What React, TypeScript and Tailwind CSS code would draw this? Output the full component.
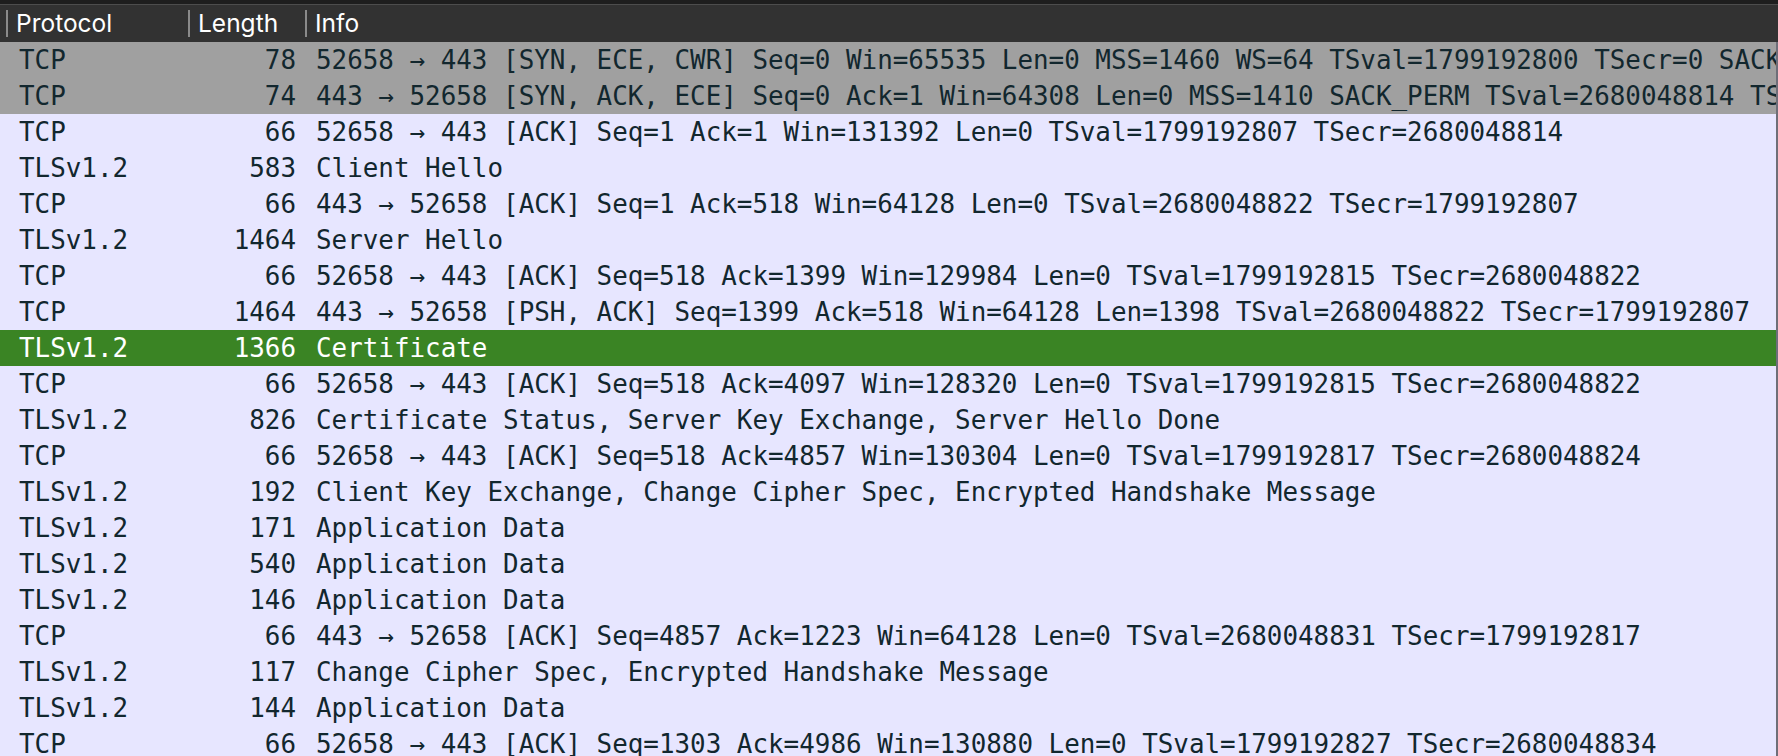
const rows: { proto: string; len: string; info: string; kind: 'syn' | 'norm' | 'sel' }[] = [
  { proto: 'TCP', len: '78', info: '52658 → 443 [SYN, ECE, CWR] Seq=0 Win=65535 Len=0 MSS=1460 WS=64 TSval=1799192800 TSecr=0 SACK_PERM', kind: 'syn' },
  { proto: 'TCP', len: '74', info: '443 → 52658 [SYN, ACK, ECE] Seq=0 Ack=1 Win=64308 Len=0 MSS=1410 SACK_PERM TSval=2680048814 TSecr=1799192800 WS=128', kind: 'syn' },
  { proto: 'TCP', len: '66', info: '52658 → 443 [ACK] Seq=1 Ack=1 Win=131392 Len=0 TSval=1799192807 TSecr=2680048814', kind: 'norm' },
  { proto: 'TLSv1.2', len: '583', info: 'Client Hello', kind: 'norm' },
  { proto: 'TCP', len: '66', info: '443 → 52658 [ACK] Seq=1 Ack=518 Win=64128 Len=0 TSval=2680048822 TSecr=1799192807', kind: 'norm' },
  { proto: 'TLSv1.2', len: '1464', info: 'Server Hello', kind: 'norm' },
  { proto: 'TCP', len: '66', info: '52658 → 443 [ACK] Seq=518 Ack=1399 Win=129984 Len=0 TSval=1799192815 TSecr=2680048822', kind: 'norm' },
  { proto: 'TCP', len: '1464', info: '443 → 52658 [PSH, ACK] Seq=1399 Ack=518 Win=64128 Len=1398 TSval=2680048822 TSecr=1799192807', kind: 'norm' },
  { proto: 'TLSv1.2', len: '1366', info: 'Certificate', kind: 'sel' },
  { proto: 'TCP', len: '66', info: '52658 → 443 [ACK] Seq=518 Ack=4097 Win=128320 Len=0 TSval=1799192815 TSecr=2680048822', kind: 'norm' },
  { proto: 'TLSv1.2', len: '826', info: 'Certificate Status, Server Key Exchange, Server Hello Done', kind: 'norm' },
  { proto: 'TCP', len: '66', info: '52658 → 443 [ACK] Seq=518 Ack=4857 Win=130304 Len=0 TSval=1799192817 TSecr=2680048824', kind: 'norm' },
  { proto: 'TLSv1.2', len: '192', info: 'Client Key Exchange, Change Cipher Spec, Encrypted Handshake Message', kind: 'norm' },
  { proto: 'TLSv1.2', len: '171', info: 'Application Data', kind: 'norm' },
  { proto: 'TLSv1.2', len: '540', info: 'Application Data', kind: 'norm' },
  { proto: 'TLSv1.2', len: '146', info: 'Application Data', kind: 'norm' },
  { proto: 'TCP', len: '66', info: '443 → 52658 [ACK] Seq=4857 Ack=1223 Win=64128 Len=0 TSval=2680048831 TSecr=1799192817', kind: 'norm' },
  { proto: 'TLSv1.2', len: '117', info: 'Change Cipher Spec, Encrypted Handshake Message', kind: 'norm' },
  { proto: 'TLSv1.2', len: '144', info: 'Application Data', kind: 'norm' },
  { proto: 'TCP', len: '66', info: '52658 → 443 [ACK] Seq=1303 Ack=4986 Win=130880 Len=0 TSval=1799192827 TSecr=2680048834', kind: 'norm' },
];

function HeaderCell({ label, className }: { label: string; className: string }) {
  return (
    <div className={`flex items-center h-full ${className}`}>
      <div className="w-[2px] h-[27px] bg-[#8a8a8a]" />
      <span className="pl-[8px]">{label}</span>
    </div>
  );
}

export default function App() {
  return (
    <div className="w-[1778px] h-[756px] overflow-hidden bg-[#e7e6ff] flex flex-col">
      {/* top window chrome strip */}
      <div className="h-[4px] bg-[#1e1e1e] shrink-0" />
      <div className="h-[1px] bg-[#4d4d4d] shrink-0" />

      {/* column header */}
      <div
        className="h-[37px] shrink-0 bg-[#323232] text-white text-[24.5px] flex items-center"
        style={{ fontFamily: 'Inter, "Liberation Sans", sans-serif' }}
      >
        <div className="w-[6px]" />
        <HeaderCell label="Protocol" className="w-[182px]" />
        <HeaderCell label="Length" className="w-[117px]" />
        <HeaderCell label="Info" className="flex-1" />
      </div>

      {/* packet list */}
      <div
        className="flex-1 border-r-2 border-[#6e6e78] text-[25.9px]"
        style={{ fontFamily: '"DejaVu Sans Mono", monospace' }}
      >
        {rows.map((r, i) => (
          <div
            key={i}
            className={`h-[36px] flex items-center whitespace-pre overflow-hidden ${
              r.kind === 'syn'
                ? 'bg-[#a0a0a0] text-[#12272e]'
                : r.kind === 'sel'
                ? 'bg-[#3a8424] text-white'
                : 'bg-[#e7e6ff] text-[#12272e]'
            }`}
          >
            <span className="w-[188px] shrink-0 pl-[19px]">{r.proto}</span>
            <span className="w-[108px] shrink-0 text-right">{r.len}</span>
            <span className="pl-[20px]">{r.info}</span>
          </div>
        ))}
      </div>
    </div>
  );
}
